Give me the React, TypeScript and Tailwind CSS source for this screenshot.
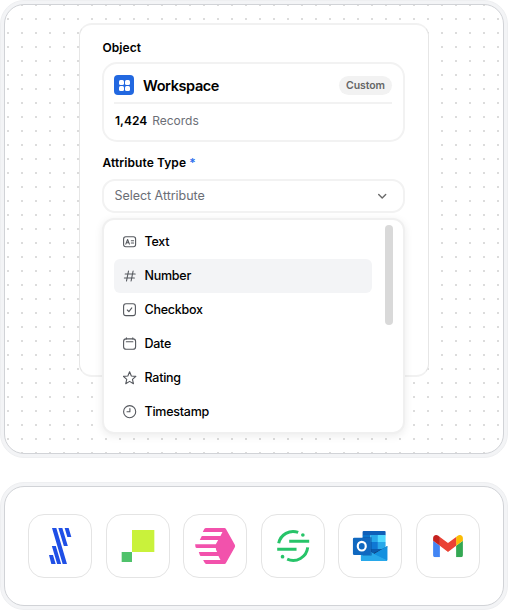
import type { ReactNode } from "react";

const stroke = { fill: "none", stroke: "#55585e", strokeWidth: 1.1, strokeLinecap: "round", strokeLinejoin: "round" } as const;

function Icon({ children }: { children: ReactNode }) {
  return (
    <svg className="size-[14px] shrink-0" viewBox="0 0 14 14" {...stroke}>
      {children}
    </svg>
  );
}

const attributes = [
  {
    label: "Text",
    icon: (
      <Icon>
        <rect x="0.6" y="1.700" width="12" height="10" rx="2.2" />
        <path d="M2.800 9.100 4.600 4.500l1.800 4.600M3.400 7.700h2.400M8.300 5.800h2.300M8.300 8h2.300" />
      </Icon>
    ),
  },
  {
    label: "Number",
    active: true,
    icon: (
      <Icon>
        <path d="M5.500 2 3.500 12M10.100 2l-2 10M2.200 5h10M1.400 9h10" />
      </Icon>
    ),
  },
  {
    label: "Checkbox",
    icon: (
      <Icon>
        <rect x="0.6" y="0.800" width="11.8" height="11.8" rx="2.4" />
        <path d="m4.300 7 1.600 1.600 2.900-3.700" />
      </Icon>
    ),
  },
  {
    label: "Date",
    icon: (
      <Icon>
        <rect x="0.6" y="1.900" width="12" height="10.4" rx="2.6" />
        <path d="M3.400 .9v1M9.800 .9v1M3.300 4.800h6.600" />
      </Icon>
    ),
  },
  {
    label: "Rating",
    icon: (
      <Icon>
        <path d="m6.600 .8 1.750 4.150 4.500.4-3.400 3 1 4.350L6.600 10.400l-3.850 2.300 1-4.350-3.400-3 4.500-.4z" />
      </Icon>
    ),
  },
  {
    label: "Timestamp",
    icon: (
      <Icon>
        <circle cx="6.650" cy="6.700" r="6.050" />
        <path d="M6.900 3.600v3.200H4" />
      </Icon>
    ),
  },
];

const logos: { name: string; viewBox: string; art: ReactNode }[] = [
  {
    name: "Stripes",
    viewBox: "24 27 192 192",
    art: (
      <path
        fill="#1f4fe6"
        d="M96 69h13l32 108h-13zM115 69h12l16.500 54h-12zM134 69h12l8 27h-12zM95.500 123h12l16 54h-12zM87 150h12l8 27H94z"
      />
    ),
  },
  {
    name: "Squares",
    viewBox: "257 27 192 192",
    art: (
      <>
        <path fill="#c9f23b" d="M335 75h67v66h-67z" />
        <path fill="#4fc26b" d="M304 141h31v30h-31z" />
      </>
    ),
  },
  {
    name: "Hexagon",
    viewBox: "24.6 27 192 192",
    art: (
      <path
        fill="#f252ac"
        d="M92 69H149Q152 69 153.500 72L180 119Q182 123 180 127L153.500 174Q152 177 149 177H95Q92 177 90 174L85 165H137L131 153H78Q76 153 75 150L72 141H127Q123 135 123 129H66Q63 129 62 126L61 118H123L130 105H75L81 93H137L143 81H84L88 73Q90 69 94 69Z"
      />
    ),
  },
  {
    name: "Segment",
    viewBox: "257.4 27 192 192",
    art: (
      <g fill="none" stroke="#27c469" strokeWidth="9">
        <path d="M342 109h60M306 133h58" />
        <path d="M310.500 115A44 44 0 0 1 369 82.300M397.500 127A44 44 0 0 1 336 162.500" />
        <g fill="#27c469" stroke="none">
          <circle cx="383" cy="90" r="5.500" />
          <circle cx="322" cy="155" r="5.500" />
        </g>
      </g>
    ),
  },
  {
    name: "Outlook",
    viewBox: "25.2 27 192 192",
    art: (
      <>
        <path fill="#0f5fb8" d="M102 78h63a3 3 0 0 1 3 3v10H99V81a3 3 0 0 1 3-3z" />
        <path fill="#0a74cc" d="M99 90h23v42H99z" />
        <path fill="#28a8ea" d="M122 90h23v21h-23zM99 111h23v21H99z" />
        <path fill="#50d9ff" d="M145 90h23v21h-23z" />
        <path fill="#0f78d4" d="M122 111h23v22h-23z" />
        <path fill="#28a8ea" d="M145 111h23v22h-23z" />
        <path fill="#0b5cad" d="M122 132h46l-35 15-11-6z" />
        <path fill="#14447d" d="M168 127 173 123v4l-39 22-6-3z" />
        <path fill="#28a8ea" d="M94 123v42a3 3 0 0 0 3 3h73l3-2-39-19z" />
        <path fill="#1490df" d="m134 147 39-23v41a3 3 0 0 1-3 3H97a3 3 0 0 1-3-2z" />
        <path fill="#28a8ea" d="m128 144 45 22q-1 2-3 2H97q-3 0-3-3v-14h28z" />
        <path fill="#1490df" d="m134 147 39-23v41z" />
        <path fill="#0a4c94" opacity=".45" d="M99 96h25a3 3 0 0 1 3 3v50a3 3 0 0 1-3 3H99z" />
        <rect x="70" y="98" width="53" height="52" rx="4" fill="#1068c0" />
        <ellipse cx="96.500" cy="123.500" rx="12" ry="13" fill="none" stroke="#fff" strokeWidth="6.500" />
      </>
    ),
  },
  {
    name: "Gmail",
    viewBox: "258 27 192 192",
    art: (
      <svg x="309" y="90" width="90" height="67" viewBox="52 42 88 66">
        <path fill="#4285f4" d="M58 108h14V74L52 59v43c0 3.320 2.690 6 6 6" />
        <path fill="#34a853" d="M120 108h14c3.320 0 6-2.690 6-6V59l-20 15" />
        <path fill="#fbbc04" d="M120 48v26l20-15v-8c0-7.420-8.470-11.650-14.400-7.200" />
        <path fill="#ea4335" d="M72 74V48l24 18 24-18v26L96 92" />
        <path fill="#c5221f" d="M52 51v8l20 15V48l-5.600-4.200c-5.940-4.450-14.400-.220-14.400 7.200" />
      </svg>
    ),
  },
];

function ObjectCard() {
  return (
    <section className="mt-[7px] h-20 w-[303px] rounded-[15px] border-2 border-[#f2f2f2] pr-[11px] pl-2.5">
      <div className="flex h-10 items-center border-b-2 border-[#f2f2f2] pt-1">
        <div className="flex size-5 items-center justify-center rounded-[4px] bg-[#2268e0]">
          <div className="grid grid-cols-2 gap-px">
            {[0, 1, 2, 3].map((i) => (
              <span key={i} className="size-[5px] rounded-[1.5px] bg-white" />
            ))}
          </div>
        </div>
        <h2 className="ml-[9px] pt-px text-[14.5px] font-semibold tracking-[-0.4px] text-black">Workspace</h2>
        <span className="ml-auto flex h-[19px] w-[53px] items-center justify-center rounded-full bg-[#f2f2f2] pt-px text-[10.5px] font-semibold tracking-[-0.1px] text-[#666]">
          Custom
        </span>
      </div>
      <p className="flex h-[34px] items-center gap-[5px] pl-px text-[12px] text-[#6b6e76]">
        <b className="font-semibold text-black">1,424</b>
        <span>Records</span>
      </p>
    </section>
  );
}

function Dropdown() {
  return (
    <div className="absolute top-[218px] left-[102px] flex h-[216px] w-[303px] justify-between rounded-[12px] border-2 border-[#f0f0f0] bg-white pt-[5px] pr-2.5 pl-2.5 shadow-[0_2px_8px_rgba(0,0,0,0.08)]">
      <ul className="w-[258px]">
        {attributes.map((a) => (
          <li
            key={a.label}
            className={`flex h-[34px] items-center gap-[7.5px] rounded-[6px] pl-[9px] text-[12.5px] font-medium tracking-[-0.25px] text-black ${a.active ? "bg-[#f3f4f6]" : ""}`}
          >
            {a.icon}
            {a.label}
          </li>
        ))}
      </ul>
      <div className="h-[100px] w-[8.5px] rounded-full bg-[#d9d9d9]" />
    </div>
  );
}

export default function App() {
  return (
    <div className="relative flex h-[610px] w-[508px] flex-col gap-6 bg-white font-['Inter',sans-serif]">
      <div className="h-[458px] rounded-[24px] border border-[#eeeff1] bg-[#f3f4f6] p-[3px]">
        <div className="h-[450px] rounded-[20px] border border-[#d1d3d7] bg-white bg-[conic-gradient(from_270deg_at_2px_2px,#dcdcdc_90deg,transparent_0)] bg-size-[14px_14px] bg-position-[2px_-1px] pt-[18px] pl-[74px]">
          <div className="h-[354px] w-[350px] rounded-[13px] border border-y-2 border-x-[#e6e6e6] border-y-[#f1f1f1] bg-white pt-[13px] pl-[22px]">
            <h1 className="h-[17px] pl-[0.5px] text-[12px] leading-[19px] font-semibold tracking-[0.08px] text-black">Object</h1>
            <ObjectCard />
            <label className="mt-[11px] block h-5 pl-[0.5px] text-[12px] leading-5 font-semibold tracking-[0.08px] text-black">
              Attribute Type <span className="text-[#2f6fed]">*</span>
            </label>
            <div className="mt-[6px] flex h-[34px] w-[303px] items-center justify-between rounded-[13px] border-2 border-[#f2f2f2] pr-[15px] pl-[10.5px] text-[12.5px] tracking-[-0.04px] text-[#6b6e76]">
              Select Attribute
              <svg className="size-3" viewBox="0 0 12 12" fill="none" stroke="#6b6b6b" strokeWidth="1.4" strokeLinecap="round" strokeLinejoin="round">
                <path d="m2.700 4.500 3.500 3.500 3.500-3.500" />
              </svg>
            </div>
          </div>
        </div>
      </div>
      <Dropdown />
      <div className="h-[128px] rounded-[24px] border border-[#eeeff1] bg-[#f3f4f6] p-[3px]">
        <div className="flex h-[120px] items-center justify-between rounded-[20px] border border-[#d1d3d7] bg-white px-[23px]">
          {logos.map((l) => (
            <div key={l.name} className="flex size-16 items-center justify-center rounded-[16px] border border-[#e4e4e4] bg-white">
              <svg className="size-16 shrink-0" viewBox={l.viewBox} aria-hidden="true">
                {l.art}
              </svg>
            </div>
          ))}
        </div>
      </div>
    </div>
  );
}
